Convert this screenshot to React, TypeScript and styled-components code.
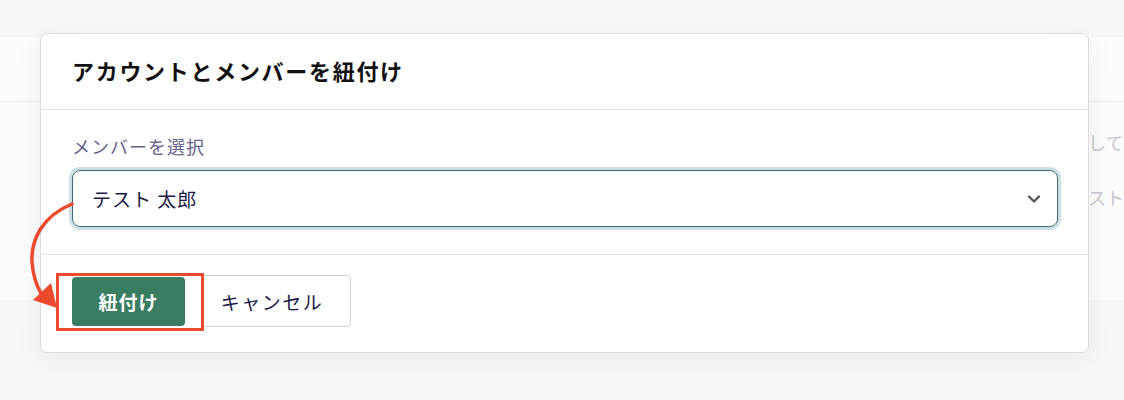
import React from 'react';
import styled, { createGlobalStyle } from 'styled-components';

const GlobalStyle = createGlobalStyle`
  html, body {
    margin: 0;
    padding: 0;
    background: #f7f7f8;
  }
  body {
    font-family: "Noto Sans CJK JP", "Noto Sans", sans-serif;
  }
`;

const Page = styled.div`
  position: relative;
  width: 1124px;
  height: 400px;
  overflow: hidden;
  padding-top: 37px;
  box-sizing: border-box;
  background: #f7f7f8;
`;

const BgCard = styled.div`
  height: 263px;
  background: #fcfcfd;
`;

const BgHeader = styled.div`
  height: 64px;
  border-bottom: 1px solid #efeff1;
`;

const BgBody = styled.div`
  padding: 28px 0 0 1070px;
  display: flex;
  flex-direction: column;
  gap: 31px;
`;

const BgLine = styled.div`
  font-size: 18px;
  line-height: 24px;
  color: #c8c5d3;
  white-space: nowrap;
`;

const Modal = styled.div`
  position: absolute;
  left: 40px;
  top: 33px;
  width: 1049px;
  height: 320px;
  box-sizing: border-box;
  background: #ffffff;
  border: 1px solid #dcdce0;
  border-radius: 7px;
  box-shadow: 0 6px 30px rgba(0, 0, 0, 0.06);
  display: flex;
  flex-direction: column;
`;

const ModalHeader = styled.div`
  height: 75px;
  display: flex;
  align-items: center;
  padding: 0 31px;
  border-bottom: 1px solid #e4e4e8;
`;

const Title = styled.h2`
  margin: 0 0 4px;
  font-size: 22px;
  font-weight: 700;
  letter-spacing: 1.7px;
  color: #111111;
`;

const ModalBody = styled.div`
  padding: 24px 30px 27px 31px;
  border-bottom: 1px solid #e4e4e8;
  display: flex;
  flex-direction: column;
  gap: 12px;
`;

const Label = styled.label`
  font-size: 18px;
  line-height: 24px;
  letter-spacing: 1px;
  color: #67628a;
`;

const SelectBox = styled.div`
  height: 57px;
  box-sizing: border-box;
  border: 1.5px solid #3f6c72;
  border-radius: 8px;
  box-shadow: 0 0 0 3px #cddfe2;
  display: flex;
  align-items: center;
  justify-content: space-between;
  padding: 0 16px 0 19px;
`;

const SelectValue = styled.span`
  font-size: 19px;
  letter-spacing: 1px;
  color: #1b1945;
`;

const ModalFooter = styled.div`
  padding: 20px 31px 0 31px;
  display: flex;
  align-items: center;
  gap: 8px;
`;

const Highlight = styled.div`
  position: relative;
  z-index: 2;
  display: flex;
`;

const HighlightFrame = styled.div`
  position: absolute;
  top: -4px;
  bottom: -5px;
  left: -16px;
  right: -19px;
  background: #ffffff;
  border: 3.5px solid #ec4a2c;
  z-index: -1;
`;

const Button = styled.button<{ $primary?: boolean }>`
  height: ${p => (p.$primary ? '49px' : '52px')};
  padding: 0;
  width: ${p => (p.$primary ? '113px' : '158px')};
  border-radius: 4px;
  font-family: "Noto Sans CJK JP", "Noto Sans", sans-serif;
  font-size: 19px;
  letter-spacing: ${p => (p.$primary ? '1px' : '1.5px')};
  font-weight: ${p => (p.$primary ? 700 : 400)};
  color: ${p => (p.$primary ? '#ffffff' : '#1b1945')};
  background: ${p => (p.$primary ? '#3a7d62' : '#ffffff')};
  border: ${p => (p.$primary ? 'none' : '1px solid #cfcfd4')};
  cursor: pointer;
`;

const ArrowLayer = styled.svg`
  position: absolute;
  left: 0;
  top: 0;
  z-index: 3;
  pointer-events: none;
`;

export default function App() {
  return (
    <>
      <GlobalStyle />
      <Page>
        <BgCard>
          <BgHeader />
          <BgBody>
            <BgLine>認して</BgLine>
            <BgLine>テスト</BgLine>
          </BgBody>
        </BgCard>

        <Modal>
          <ModalHeader>
            <Title>アカウントとメンバーを紐付け</Title>
          </ModalHeader>
          <ModalBody>
            <Label>メンバーを選択</Label>
            <SelectBox>
              <SelectValue>テスト 太郎</SelectValue>
              <svg width="14" height="10" viewBox="0 0 14 10">
                <path d="M2 2.5 L7 7.5 L12 2.5" fill="none" stroke="#555555" strokeWidth="2.4" strokeLinecap="round" strokeLinejoin="round" />
              </svg>
            </SelectBox>
          </ModalBody>
          <ModalFooter>
            <Highlight>
              <HighlightFrame />
              <Button $primary>紐付け</Button>
            </Highlight>
            <Button>キャンセル</Button>
          </ModalFooter>
        </Modal>

        <ArrowLayer width="1124" height="400" viewBox="0 0 1124 400">
          <path d="M72 204 C 42 216, 31 240, 32 262 C 33 277, 37 287, 42 295" fill="none" stroke="#ec4a2c" strokeWidth="3.5" strokeLinecap="round" />
          <polygon points="57,308 33,300 51,283" fill="#ec4a2c" />
        </ArrowLayer>
      </Page>
    </>
  );
}
